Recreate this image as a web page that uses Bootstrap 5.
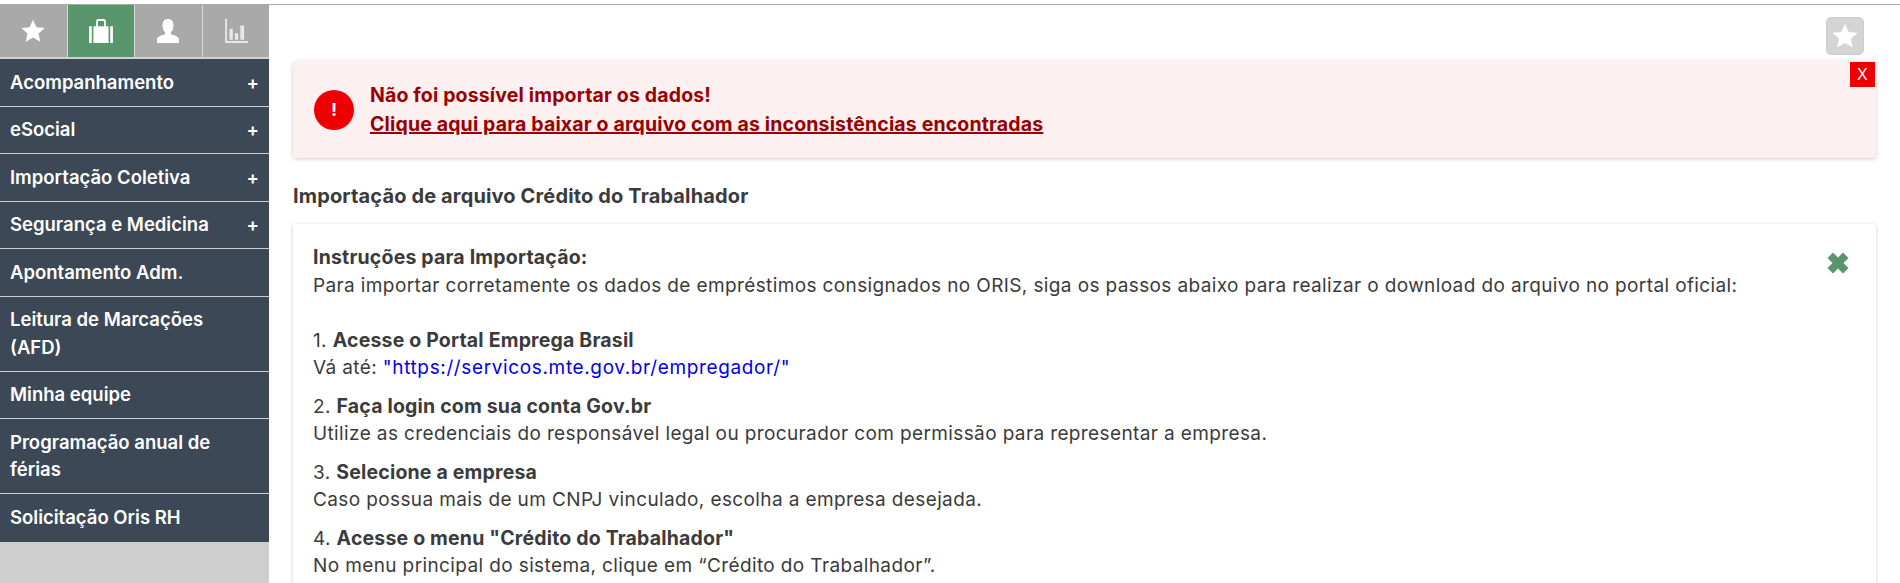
<!DOCTYPE html>
<html lang="pt-BR">
<head>
  <meta charset="UTF-8">
  <title>Importação de arquivo</title>
  <link href="https://cdn.jsdelivr.net/npm/bootstrap@5.3.3/dist/css/bootstrap.min.css" rel="stylesheet">
  <style>
    html, body { height: 100%; }
    body {
      font-family: "Inter", "Noto Sans", sans-serif;
      font-size: 19px;
      color: #3b3b3b;
      background: #fff;
      overflow: hidden;
    }
    .page-wrap {
      height: 579px;
      border-top: 1px solid #a9a9a9;
      margin-top: 4px;
    }
    .side {
      width: 269px;
      flex: none;
      background: #cfcfcf;
      height: 100%;
    }
    .tabs-top { height: 54px; padding-bottom: 2px; }
    .tab-btn {
      flex: 1 1 0;
      background: #a9a9a9;
      border-right: 1px solid #d8d8d8;
    }
    .tab-btn:last-child { border-right: 0; }
    .tab-btn.on { background: #5a966b; }
    .menu-item {
      background: #3c4856;
      color: #fff;
      font-weight: 600;
      font-size: 18.5px;
      line-height: 27.5px;
      padding: 9.5px 22px 9.5px 10px;
      border-bottom: 1px solid #cfcfcf;
    }
    .menu-item:last-child { border-bottom: 0; padding-bottom: 10.5px; }
    .menu-item .plus { margin-right: -12px; }
    .main-area { padding: 0 24px; min-width: 0; }
    .fav-box {
      width: 38px; height: 38px;
      background: #d4d4d4;
      border: 1px solid #cbcbcb;
      border-radius: 5px;
      margin: 12px 12px 0 auto;
    }
    .erro-box {
      background: #fcf0f0;
      border-radius: 3px;
      box-shadow: 0 1px 4px rgba(0,0,0,.2);
      height: 97px;
      margin-top: 6px;
      padding: 0 21px;
      color: #990000;
      font-weight: 700;
      font-size: 19.5px;
      letter-spacing: .15px;
      line-height: 29px;
      position: relative;
    }
    .erro-box a { color: #990000; text-decoration-thickness: 2px; }
    .erro-ico {
      width: 40px; height: 40px;
      background: #ee0000;
      color: #fff;
      border-radius: 50%;
      font-size: 18px;
      line-height: 1;
    }
    .erro-x {
      position: absolute;
      top: 1px; right: 1px;
      width: 25px; height: 25px;
      background: #ee0000;
      color: #fff;
      font-family: "Liberation Sans", sans-serif;
      font-weight: 400;
      font-size: 16px;
      line-height: 25px;
      text-align: center;
    }
    .titulo-sec { font-weight: 700; font-size: 20px; letter-spacing: .14px; margin: 25px 0 14px; line-height: 27px; }
    .info-box {
      background: #fff;
      border-radius: 3px;
      box-shadow: 0 1px 4px rgba(0,0,0,.2);
      padding: 20px;
      line-height: 27.5px;
      letter-spacing: .38px;
      position: relative;
      height: 400px;
    }
    .info-box b { font-weight: 700; font-size: 19.5px; letter-spacing: .18px; }
    .info-box a { color: #0000ee; text-decoration: none; letter-spacing: .63px; }
    .info-box p { margin: 0 0 11px; }
    .info-box .first { margin-bottom: 27.5px; }
    .close-x { position: absolute; top: 27px; right: 26px; }
  </style>
</head>
<body>
  <div class="page-wrap d-flex">
    <div class="side">
      <div class="tabs-top d-flex">
        <div class="tab-btn d-flex align-items-center justify-content-center">
          <svg width="26" height="26" viewBox="0 0 24 24" fill="#fff"><path d="M12 1.500l3.200 7 7.600.8-5.700 5.100 1.600 7.500L12 18.100l-6.700 3.800 1.600-7.500L1.200 9.300l7.600-.8z"/></svg>
        </div>
        <div class="tab-btn on d-flex align-items-center justify-content-center">
          <svg width="26" height="26" viewBox="0 0 24 24" fill="#fff"><path d="M1 7.500h2.500v15.500H1zM20.500 7.500H23v15.500h-2.500zM5 7.500h2.500V3a2 2 0 0 1 2-2h5a2 2 0 0 1 2 2v4.500H19V23H5zM9.200 7.500h5.600V3.200a.5.500 0 0 0-.5-.5H9.700a.5.500 0 0 0-.5.500z"/></svg>
        </div>
        <div class="tab-btn d-flex align-items-center justify-content-center">
          <svg width="24" height="26" viewBox="0 0 24 24" preserveAspectRatio="none" fill="#fff"><path d="M12 1c3.500 0 5.500 2.500 5.500 6 0 2.500-1 5-2.500 6.300v1.700c3 1 8 2 8 5V23H1v-3c0-3 5-4 8-5v-1.700C7.500 12 6.500 9.500 6.500 7c0-3.500 2-6 5.500-6z"/></svg>
        </div>
        <div class="tab-btn d-flex align-items-center justify-content-center">
          <svg width="26" height="26" viewBox="0 0 24 24" fill="#e8e8e8"><path d="M2 1h1.700v20.300H23V23H2zM6 10h3v10H6zM11 14h3v6h-3zM16 7h3.500v13H16z"/></svg>
        </div>
      </div>
      <div class="menu-item d-flex justify-content-between"><span>Acompanhamento</span><span class="plus">+</span></div>
      <div class="menu-item d-flex justify-content-between"><span>eSocial</span><span class="plus">+</span></div>
      <div class="menu-item d-flex justify-content-between"><span>Importação Coletiva</span><span class="plus">+</span></div>
      <div class="menu-item d-flex justify-content-between"><span>Segurança e Medicina</span><span class="plus">+</span></div>
      <div class="menu-item">Apontamento Adm.</div>
      <div class="menu-item">Leitura de Marcações (AFD)</div>
      <div class="menu-item">Minha equipe</div>
      <div class="menu-item">Programação anual de férias</div>
      <div class="menu-item">Solicitação Oris RH</div>
    </div>
    <div class="main-area flex-grow-1">
      <div class="fav-box d-flex align-items-center justify-content-center">
        <svg width="28" height="28" viewBox="0 0 24 24" fill="#fff"><path d="M12 1.500l3.200 7 7.600.8-5.700 5.100 1.600 7.500L12 18.100l-6.700 3.800 1.600-7.500L1.200 9.300l7.600-.8z"/></svg>
      </div>
      <div class="erro-box d-flex align-items-center gap-3">
        <div class="erro-ico d-flex align-items-center justify-content-center flex-shrink-0">!</div>
        <div>
          <div>Não foi possível importar os dados!</div>
          <a href="#">Clique aqui para baixar o arquivo com as inconsistências encontradas</a>
        </div>
        <div class="erro-x">X</div>
      </div>
      <div class="titulo-sec">Importação de arquivo Crédito do Trabalhador</div>
      <div class="info-box">
        <svg class="close-x" width="24" height="24" viewBox="0 0 24 24" fill="#5a966b"><path d="M7 1.500L12 6.500l5-5 5.500 5.500-5 5 5 5-5.500 5.500-5-5-5 5L1.500 17l5-5-5-5z"/></svg>
        <p class="first"><b>Instruções para Importação:</b><br>Para importar corretamente os dados de empréstimos consignados no ORIS, siga os passos abaixo para realizar o download do arquivo no portal oficial:</p>
        <p>1. <b>Acesse o Portal Emprega Brasil</b><br>Vá até: <a href="#">"https://servicos.mte.gov.br/empregador/"</a></p>
        <p>2. <b>Faça login com sua conta Gov.br</b><br>Utilize as credenciais do responsável legal ou procurador com permissão para representar a empresa.</p>
        <p>3. <b>Selecione a empresa</b><br>Caso possua mais de um CNPJ vinculado, escolha a empresa desejada.</p>
        <p>4. <b>Acesse o menu "Crédito do Trabalhador"</b><br>No menu principal do sistema, clique em “Crédito do Trabalhador”.</p>
      </div>
    </div>
  </div>
  <script src="https://cdn.jsdelivr.net/npm/bootstrap@5.3.3/dist/js/bootstrap.bundle.min.js"></script>
</body>
</html>
